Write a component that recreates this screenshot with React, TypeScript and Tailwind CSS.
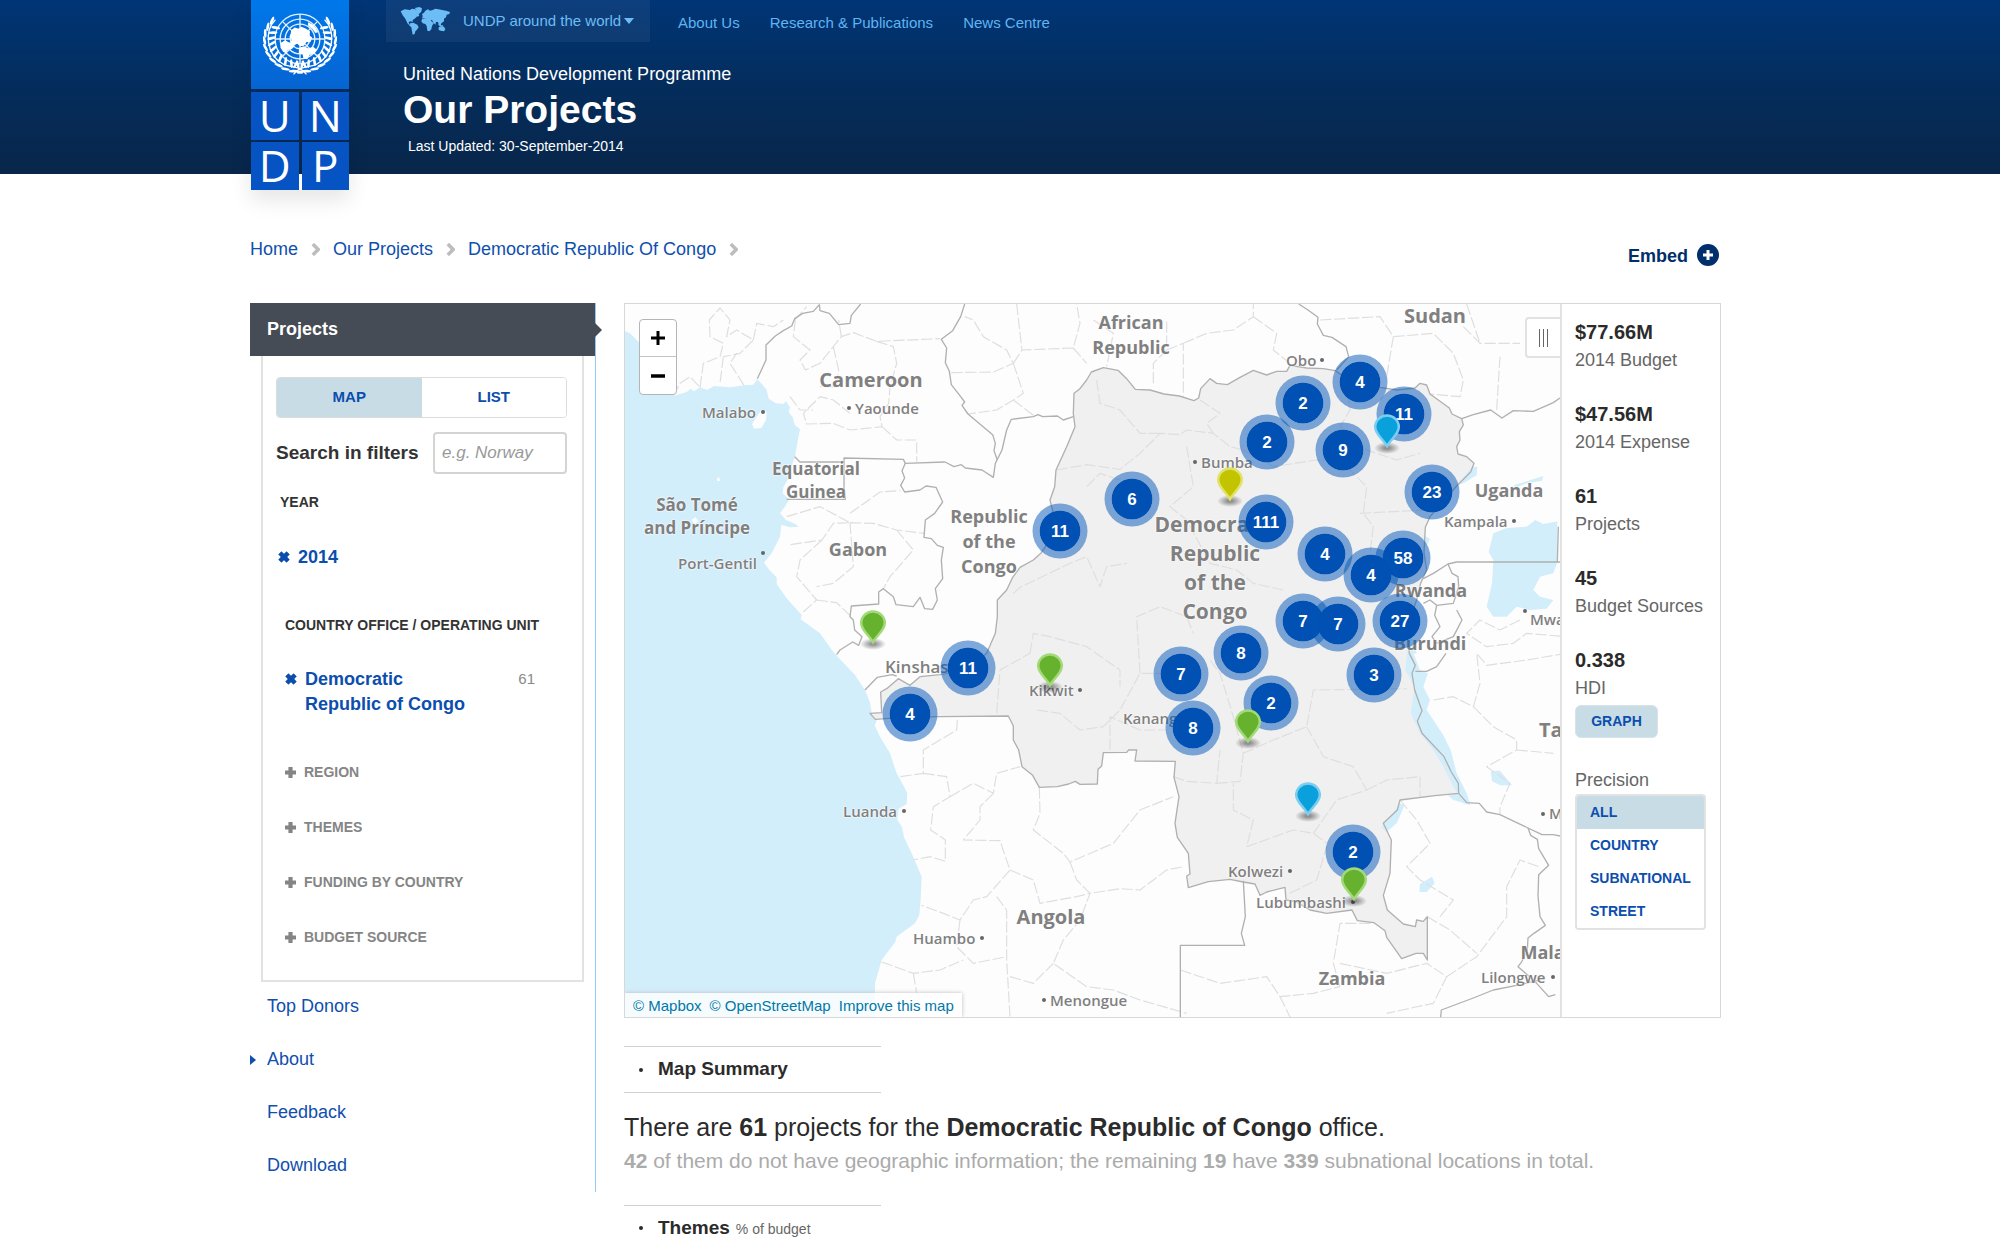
import React from "react";

const SANS = "font-['Liberation_Sans',Arial,sans-serif]";

/* ---------- Header artwork ---------- */

const leafAngles = [18, 31, 44, 57, 70, 83, 96, 109, 122, 135, 148];

function Emblem() {
  const spokes = [0, 45, 90, 135];
  return (
    <svg viewBox="0 0 220 190" className="h-[64px] w-[74px]" aria-hidden="true">
      <g stroke="#e4f2ff" fill="none" strokeWidth="4">
        {[74, 59, 44, 29].map((r) => (
          <circle key={r} cx="110" cy="80" r={r} />
        ))}
        {spokes.map((a) => (
          <path key={a} d="M36 80H184" transform={`rotate(${a} 110 80)`} />
        ))}
      </g>
      <g fill="#ffffff">
        <path d="M84 54l10-8 12 4 8-6 14 6 12 8-2 12 8 6-4 12-14 2-6 10-12 2-8-8-10 4-10-8 4-10-8-6 4-8z" />
        <path d="M52 92l14-8 10 6 12 2 6 10-8 8-12 2-6 10-8-4-8-12z" />
        <path d="M108 106l14-4 12 6 16-4 10 8-8 12-14 4-6 12-12-2-2-12-12-6z" />
        <path d="M134 30l12 6 10 10 8 14-8 2-10-12-12-10z" />
      </g>
      <g stroke="#ffffff" fill="none" strokeWidth="4" strokeLinecap="round">
        <path d="M36 24C4 56 8 128 62 156C88 166 110 160 128 184" />
        <path d="M184 24C216 56 212 128 158 156C132 166 110 160 92 184" />
      </g>
      <g fill="#ffffff">
        {[1, -1].map((side) => (
          <g key={side} transform={side === 1 ? undefined : "translate(220 0) scale(-1 1)"}>
            {leafAngles.map((a) => {
              const t = ((a + 38) * Math.PI) / 180;
              const x = 110 - Math.sin(t) * 96;
              const y = 84 - Math.cos(t) * 84;
              return (
                <g key={a} transform={`translate(${x} ${y}) rotate(${-a - 10})`}>
                  <ellipse cx="9" cy="-8" rx="13" ry="4" transform="rotate(-38 0 0)" />
                  <ellipse cx="9" cy="8" rx="13" ry="4" transform="rotate(38 0 0)" />
                </g>
              );
            })}
          </g>
        ))}
      </g>
    </svg>
  );
}

function WorldIcon() {
  return (
    <svg viewBox="512 22 150 90" className="h-[30px] w-[50px]" fill="#6cbcf5" aria-hidden="true">
      <path d="M514 38l12-6 16 2 6-4 10 2 8 4-4 6 6 4 2 6-8 2-6 6-6 4 0 6-6-2-6 2 2 8 8 2 2 6-8-4-8-8-6-14-8-10z" />
      <path d="M556 28l14-3 8 4-2 10-8 8-8-4 2-8z" />
      <path d="M542 74l10-2 12 6 4 8-6 8-4 4-2 8-6 2-2-10-2-12-6-6z" />
      <path d="M580 52l-2-6 6-4 4-6 8-4 6 4 8-2 8-4 10 2 10 2 12 2 12 4-2 6-8 2-2 8-6 4 0 8-8 6-2 6-6-2-2-8-6 0-2 8-6-6-4-8-8 0-8-4-8-2-6 2z" />
      <path d="M578 62l10-4 14 2 6 10 6 2-6 10-2 10-6 6-6-2-2-14-4-6-8-2-4-6z" />
      <path d="M628 86l8-4 8 2 4 8-4 6-10-2-6-2zM626 76l10 4 6 0-2 3-10-1z" />
    </svg>
  );
}

function LogoTile({ letter }: { letter: string }) {
  return (
    <span className="flex h-12 items-center justify-center bg-[#0653c3] font-['Open_Sans','Noto_Sans',sans-serif] text-[44px] leading-[46px] text-white">
      <span className="h-12">{letter}</span>
    </span>
  );
}

function Header() {
  return (
    <header className="h-[174px] bg-linear-to-b from-[#003576] via-[#042d5c] to-[#08264a]">
      <div className="mx-auto flex max-w-[1500px]">
        <a href="#undp" aria-label="UNDP" className="z-10 ml-px block h-[190px] w-[98px] shrink-0 shadow-[0_10px_20px_rgba(0,0,0,0.1)]">
          <span className="flex h-[89px] justify-center bg-linear-to-b from-[#0078ea] to-[#0664d2] pt-[12px]">
            <Emblem />
          </span>
          <span className="mt-[3px] grid grid-cols-2 gap-x-[3px] gap-y-[2px]">
            {["U", "N", "D", "P"].map((l) => (
              <LogoTile key={l} letter={l} />
            ))}
          </span>
        </a>
        <div className="ml-[37px] grow">
          <nav className="flex h-[42px] items-center text-[15px] text-[#5fb4f3]">
            <button className="flex h-full w-[264px] items-center bg-white/5 pl-[14px] text-[#6cbcf5]">
              <WorldIcon />
              <span className="ml-[13px]">UNDP around the world</span>
              <svg viewBox="0 0 10 6" className="ml-[3px] h-[6px] w-[10px]" fill="currentColor" aria-hidden="true">
                <path d="M0 0h10L5 6z" />
              </svg>
            </button>
            <a href="#about-us" className="ml-[28px] pt-1">About Us</a>
            <a href="#research" className="ml-[30px] pt-1">Research &amp; Publications</a>
            <a href="#news" className="ml-[30px] pt-1">News Centre</a>
          </nav>
          <div className="ml-[17px] pt-[20px] text-white">
            <p className="text-[18px] leading-[24px]">United Nations Development Programme</p>
            <h1 className="text-[39px] leading-[48px] font-bold">Our Projects</h1>
            <p className="ml-[5px] text-[14px] leading-[24px]">Last Updated: 30-September-2014</p>
          </div>
        </div>
      </div>
    </header>
  );
}

/* ---------- Breadcrumbs ---------- */

function Chevron() {
  return (
    <svg viewBox="0 0 10 14" className="mx-[13px] h-[13px] w-[9px]" fill="none" stroke="#bdbdbd" strokeWidth="4" aria-hidden="true">
      <path d="M2 1l6 6-6 6" />
    </svg>
  );
}

function Crumbs() {
  return (
    <div className="flex h-[129px] justify-between">
      <nav aria-label="Breadcrumb" className="mt-[63px] flex h-6 items-center self-start text-[18px] text-[#0f4fae]">
        {["Home", "Our Projects", "Democratic Republic Of Congo"].map((c) => (
          <React.Fragment key={c}>
            <a href="#crumb">{c}</a>
            <Chevron />
          </React.Fragment>
        ))}
      </nav>
      <button className="mt-[70px] mr-[2px] flex h-6 items-center gap-[9px] text-[18px] font-bold text-[#002f6c]">
        Embed
        <svg viewBox="0 0 22 22" className="mb-[2px] h-[22px] w-[22px]" aria-hidden="true">
          <circle cx="11" cy="11" r="11" fill="#002f6c" />
          <path d="M11 6v10M6 11h10" stroke="#fff" strokeWidth="3" />
        </svg>
      </button>
    </div>
  );
}

/* ---------- Sidebar ---------- */

function PlusMark({ className }: { className: string }) {
  return (
    <svg viewBox="0 0 10 10" className={className} fill="currentColor" aria-hidden="true">
      <path d="M3.100 0h3.800v3.100H10v3.800H6.900V10H3.100V6.900H0V3.100h3.100z" />
    </svg>
  );
}

function Sidebar() {
  return (
    <aside className="w-[346px] shrink-0 border-r border-[#93c9f0]">
      <h2 className="flex h-[53px] items-center bg-[#454c55] pl-[17px] text-[18px] font-bold text-white">
        <span className="grow">Projects</span>
        <svg viewBox="0 0 7 14" className="-mr-[7px] h-[14px] w-[7px]" fill="#454c55" aria-hidden="true">
          <path d="M0 0l7 7-7 7z" />
        </svg>
      </h2>
      <div className="mx-[11px] h-[626px] border-2 border-t-0 border-[#e2e2e2] pt-[21px] pr-[15px] pl-[13px]">
        <div className="grid h-[41px] grid-cols-2 overflow-hidden rounded border border-[#dcdcdc] text-[15px] font-bold text-[#0b4eae]">
          <button className="bg-[#c7dce5]">MAP</button>
          <button className="bg-white">LIST</button>
        </div>
        <div className="mt-[14px] flex h-[42px] items-center">
          <label htmlFor="filter-search" className="grow text-[19px] font-bold whitespace-nowrap text-[#333]">
            Search in filters
          </label>
          <input
            id="filter-search"
            placeholder="e.g. Norway"
            className="h-[42px] w-[134px] rounded border-2 border-[#d4d4d4] px-[7px] text-[17px] italic placeholder:text-[#999]"
          />
        </div>
        <h3 className="mt-[18px] ml-[4px] h-5 text-[14px] leading-5 font-bold text-[#333]">YEAR</h3>
        <button className="mt-[33px] ml-[2px] flex h-6 items-center gap-[8px] text-[18px] font-bold text-[#0b4eae]">
          <PlusMark className="h-[12px] w-[12px] rotate-45" />
          2014
        </button>
        <h3 className="mt-[46px] ml-[9px] h-5 text-[14px] leading-5 font-bold whitespace-nowrap text-[#333]">
          COUNTRY OFFICE / OPERATING UNIT
        </h3>
        <div className="mt-[32px] ml-[9px] flex items-start">
          <button className="flex w-[190px] gap-[8px] text-left text-[18px] leading-[25px] font-bold text-[#0b4eae]">
            <PlusMark className="mt-[6px] h-[12px] w-[12px] shrink-0 rotate-45" />
            <span>Democratic Republic of Congo</span>
          </button>
          <span className="ml-auto pr-[32px] text-[15px] leading-[24px] text-[#8a8a8a]">61</span>
        </div>
        <ul className="mt-[28px] ml-[9px] text-[14px] font-bold text-[#858585]">
          {["REGION", "THEMES", "FUNDING BY COUNTRY", "BUDGET SOURCE"].map((s) => (
            <li key={s}>
              <button className="flex h-[55px] items-center gap-[8px]">
                <PlusMark className="h-[11px] w-[11px]" />
                {s}
              </button>
            </li>
          ))}
        </ul>
      </div>
      <nav className="-mt-[2px] text-[18px] text-[#0f4fae]">
        {["Top Donors", "About", "Feedback", "Download"].map((s) => (
          <a key={s} href="#section" className="flex h-[53px] items-center">
            <span className="flex w-[17px]">
              {s === "About" && (
                <svg viewBox="0 0 6 10" className="h-[10px] w-[6px]" fill="currentColor" aria-hidden="true">
                  <path d="M0 0l6 5-6 5z" />
                </svg>
              )}
            </span>
            {s}
          </a>
        ))}
      </nav>
    </aside>
  );
}

/* ---------- Map ---------- */

const OCEAN =
  "M0 88L30 100L60 130L120 240L160 288L200 276L212 266L222 274L240 262L262 270L282 258L330 262L372 256L400 254L412 238L428 254L440 270L446 296L468 310L490 312L498 304L510 322L506 336L518 352L524 374L540 388L532 430L525 470L514 500L504 538L490 562L488 580L508 598L496 618L480 640L498 660L526 672L536 680L510 682L484 674L480 710L455 760L432 788L448 810L470 832L470 852L500 895L545 945L542 958L600 1000L640 1056L660 1078L705 1125L735 1170L750 1208L756 1244L770 1262L764 1276L780 1310L810 1360L830 1420L850 1456L862 1480L860 1512L836 1526L832 1560L846 1580L852 1612L875 1660L905 1730L902 1800L898 1846L885 1870L830 1910L826 1926L785 1980L765 2050L764 2151L0 2151Z";

const DRC =
  "M766 1258L750 1240L785 1238L782 1176L800 1166L835 1136L870 1156L900 1130L960 1124L1040 1110L1100 1060L1126 1000L1132 950L1132 900L1160 870L1178 832L1200 802L1240 780L1264 758L1290 720L1300 640L1290 600L1304 560L1308 510L1340 440L1365 380L1360 340L1362 280L1378 268L1400 240L1414 216L1450 203L1494 211L1520 236L1546 268L1590 270L1632 282L1678 288L1722 302L1736 294L1742 266L1770 236L1790 250L1822 254L1860 232L1900 211L1940 225L1970 214L2000 214L2010 196L2060 204L2110 206L2146 212L2180 236L2230 250L2280 262L2330 270L2385 264L2400 250L2420 255L2430 282L2460 304L2488 324L2496 342L2525 356L2530 375L2518 395L2520 420L2510 440L2514 462L2540 470L2562 490L2552 516L2510 558L2430 650L2416 682L2412 758L2420 810L2402 850L2390 900L2372 950L2362 1000L2368 1060L2386 1096L2376 1120L2384 1170L2406 1232L2392 1264L2406 1300L2442 1338L2472 1370L2494 1416L2515 1450L2516 1480L2445 1487L2340 1500L2332 1530L2290 1570L2314 1620L2310 1720L2290 1786L2302 1830L2350 1872L2386 1880L2390 1860L2410 1864L2422 1850L2422 1980L2410 1960L2388 1960L2345 1976L2300 1912L2295 1892L2262 1868L2212 1862L2196 1830L2120 1840L2070 1830L2030 1806L1998 1800L1995 1762L1940 1776L1920 1786L1905 1752L1870 1746L1830 1738L1765 1745L1705 1763L1700 1728L1710 1722L1705 1660L1672 1612L1665 1570L1677 1490L1662 1432L1666 1384L1545 1383L1550 1350L1526 1350L1520 1357L1450 1358L1445 1398L1434 1408L1432 1452L1380 1453L1366 1444L1346 1452L1312 1460L1258 1462L1238 1426L1206 1400L1196 1350L1180 1320L1180 1278L1165 1248L960 1250L850 1252Z";

const BORDERS = [
  "M412 236L438 180L438 135L466 108L490 92L515 78L524 56L548 40L580 34L598 14L600 32L628 40L656 74L690 70L694 46L722 12",
  "M1034 12L1022 50L998 92L964 118L980 144L976 188L988 214L994 254L1022 290L1034 306L1026 316L1044 342L1118 404L1126 430L1122 452L1132 480",
  "M524 470L540 486L672 486L672 474L850 478L856 490L975 486L1002 500L1024 494L1036 504L1086 510L1120 532L1126 490L1146 450L1160 390L1174 358L1240 350L1254 344L1268 350L1312 348L1330 360L1360 350",
  "M856 490L846 512L854 534L842 556L854 576L900 570L918 558L948 562L968 606L944 640L916 660L912 712L934 716L952 736L970 742L964 780L968 836L946 866L952 900L938 928L914 926L900 892L880 920L828 914L820 890L790 866L776 876L776 912L694 918L690 950L700 960L704 990L726 1010L716 1036L698 1026L660 1050L650 1064",
  "M672 486L672 560L676 598L500 598",
  "M735 1170L772 1132L816 1124L830 1128",
  "M2036 12L2064 30L2094 52L2092 72L2110 106L2136 112L2178 140L2186 170L2150 210",
  "M2525 356L2560 344L2612 330L2646 354L2680 332L2740 334L2800 308L2840 280",
  "M2410 836L2440 820L2484 792L2510 786L2840 786M2815 680L2812 786",
  "M2484 792L2496 820L2514 830L2516 860L2500 910L2450 916L2430 900L2410 910",
  "M2450 916L2444 946L2460 980L2436 1010L2450 1030L2500 1010L2526 960L2510 930",
  "M2386 1114L2420 1114L2450 1100L2478 1060",
  "M2516 1480L2540 1508L2578 1510L2600 1536L2640 1544L2690 1568L2724 1584L2766 1604L2800 1604L2840 1612",
  "M2724 1584L2732 1606L2752 1618L2756 1646L2786 1696L2756 1724L2754 1788L2760 1850L2776 1876L2742 1900L2724 1914L2722 1950L2706 1984L2694 2000L2710 2014L2750 2050L2786 2090L2806 2084",
  "M2462 2151L2464 2130L2560 2094L2620 2070L2690 2056L2760 2040",
  "M1870 1742L1876 1850L1864 1900L1874 1936L1681 1936L1681 2151",
];

const PROVINCES = [
  "M160 288L180 250L210 230L240 262M240 262L250 190L300 170L310 130L270 110L268 60L300 24L330 60L320 110L350 90L400 120L360 160L310 170M310 170L300 250M372 256L330 190L350 160M400 120L410 70L460 80L490 60",
  "M524 60L560 20M526 60L520 110L570 150L540 180L556 210L600 190L640 140L664 110L700 98L770 124L960 116M664 110L656 60M640 140L656 210L650 260L600 260M770 124L820 140L830 190L810 260L806 310L780 350L786 380L730 386L690 390L640 370L560 372L550 340L600 290L640 300L690 340",
  "M786 380L830 420L890 420L890 486M510 290L540 330L580 330M994 218L1120 216L1180 190L1160 150L1090 110L1060 60L1034 50M1180 190L1206 150L1360 144L1380 70L1370 12M1190 12L1200 100L1206 150M1180 190L1210 280L1180 300L1130 330L1044 342M1180 300L1240 346M1360 144L1400 190",
  "M500 650L600 620L690 668L640 670L606 720L510 734M690 668L760 670L830 690L912 700M690 640L780 576L842 572M606 720L540 780L530 830L590 900L545 940M830 690L880 750L810 830L790 866M690 668L700 800L640 850L590 860M590 900L650 908L694 950",
  "M1310 510L1400 494L1500 508L1560 460L1620 400L1680 404L1700 390L1780 400L1830 440L1870 450M1400 560L1440 520L1500 540M1180 880L1200 862L1350 790L1400 770L1440 860L1460 800L1520 790M1870 450L1960 500L2090 480L2160 480L2240 560L2230 640L2260 680L2250 760",
  "M1430 240L1440 310L1500 330L1560 400L1620 400M1740 300L1800 340L1760 370L1780 400M1700 440L1720 560L1650 620L1700 660L1770 790L1850 810L1900 850L1990 870M2180 236L2190 330L2160 380L2240 450L2330 480L2400 460",
  "M1230 1060L1240 1000L1290 1010L1400 1040L1500 1110L1500 1160M1130 1240L1140 1110L1230 1060M1250 1230L1320 1240L1380 1290L1450 1280L1500 1230L1560 1120L1700 1120M1560 1120L1550 950L1620 920L1700 950L1720 1000M1470 1350L1470 1250L1560 1290L1640 1290",
  "M1660 1430L1700 1444L1790 1450L1800 1350M1790 1450L1860 1444L1870 1360L1840 1250L1800 1120L1770 1080M1870 1360L1960 1320L2060 1280L2080 1170L2360 1166M2060 1280L2110 1370L2200 1400L2240 1470L2150 1500L2080 1600L2020 1590L1880 1640L1900 1560L1840 1530L1840 1450M2240 1470L2300 1440L2400 1430L2400 1490M2080 1600L2120 1630M2010 1780L2090 1740L2120 1640",
  "M1012 1260L1010 1290L910 1350L910 1420L840 1430M910 1420L980 1430L990 1490L940 1520L932 1590L976 1620L976 1684L930 1670L880 1680M990 1490L1060 1450L1120 1480L1130 1420L1200 1400M1120 1480L1080 1520L1080 1560L1030 1620L1140 1622L1170 1710L1100 1790L1060 1800L1020 1860L970 1840L905 1816",
  "M1258 1462L1260 1540L1240 1590L1330 1660L1350 1686L1480 1630L1560 1530L1660 1490M1350 1686L1370 1740L1410 1780L1500 1766L1560 1770L1640 1710L1690 1700M1170 1710L1240 1740L1260 1810L1370 1790L1410 1780L1380 1860L1330 1920L1300 1990L1400 2060L1480 2070L1560 2100L1700 2140M1130 1790L1160 1830L1160 1980L1170 2151M1020 1860L1010 1940L1060 1990L1160 1970M785 1986L880 2020L960 2010L1030 1980M880 2020L890 2080M1170 2030L1240 2050L1300 1990",
  "M1681 2010L1800 2050L1940 2030L1980 2090L2080 2080L2160 2060M1980 2090L2010 2151M2160 2060L2140 1990L2160 1870L2260 1870M2422 1850L2490 1890L2570 1960M2160 1990L2300 2020L2420 1990L2480 2030L2440 2110L2300 2140M2480 2030L2570 1970L2660 1850L2660 1760L2700 1680L2756 1700",
  "M2340 1500L2390 1560L2430 1630L2360 1700L2400 1740L2500 1800L2460 1850M2440 1200L2500 1190L2560 1220L2580 1150L2570 1060L2600 1096L2720 1080L2840 1060M2560 1220L2620 1280L2690 1320L2690 1350L2600 1400L2670 1450L2640 1520L2640 1544M2690 1350L2800 1360",
  "M2100 60L2280 50L2320 110L2440 100L2500 160L2530 240L2520 290L2430 282M2320 110L2300 230M2530 80L2580 130L2700 130M2540 12L2580 130M2640 170L2630 330M1420 60L1480 100L1460 200M1690 130L1760 100L1840 90L1900 50L1900 12M1640 150L1690 130L1690 290M1600 250L1600 190L1640 150L1640 60M1900 50L1970 100L1960 150L2010 190",
  "M2220 640L2415 630M2260 870L2240 800L2400 780M2700 960L2640 990L2580 960L2540 1000L2600 1040L2680 1030L2720 1000L2840 1010",
];

const LAKES = [
  "M2620 700L2660 684L2720 680L2746 660L2770 672L2812 664L2812 786L2800 820L2760 830L2740 870L2760 890L2800 900L2780 926L2730 930L2690 920L2660 950L2620 950L2600 920L2616 850L2620 780L2606 756Z",
  "M2362 1050L2380 1060L2400 1110L2424 1120L2410 1160L2430 1200L2420 1230L2440 1260L2470 1306L2492 1350L2510 1420L2540 1480L2552 1516L2530 1510L2500 1460L2470 1400L2440 1350L2400 1300L2372 1240L2384 1160L2356 1110Z",
  "M2340 1510L2354 1516L2330 1570L2300 1596L2284 1580L2318 1540Z",
  "M2510 556L2556 500L2572 500L2570 526L2530 550Z",
  "M2612 1414L2640 1412L2676 1456L2640 1456L2616 1444Z",
  "M2400 1752L2436 1730L2444 1750L2420 1776L2398 1776Z",
  "M2484 1486L2514 1480L2540 1512L2500 1500Z",
  "M2680 556L2770 528L2766 542L2720 550L2690 562Z",
  "M2410 706L2430 716L2418 740Z",
  "M2362 990L2374 1010L2390 1060L2366 1064Z",
];

type City = { name: string; x: number; y: number; dot?: [number, number]; big?: boolean };

const CITIES: City[] = [
  { name: "Yaounde", x: 855, y: 408, dot: [849, 408] },
  { name: "Malabo", x: 702, y: 412, dot: [763, 412] },
  { name: "Port-Gentil", x: 678, y: 563, dot: [763, 553] },
  { name: "Obo", x: 1286, y: 360, dot: [1322, 360] },
  { name: "Bumba", x: 1201, y: 462, dot: [1195, 462] },
  { name: "Kampala", x: 1444, y: 521, dot: [1514, 521] },
  { name: "Mwanza", x: 1530, y: 619, dot: [1525, 611] },
  { name: "Mbeya", x: 1549, y: 813, dot: [1543, 814] },
  { name: "Lilongwe", x: 1481, y: 977, dot: [1553, 977] },
  { name: "Lubumbashi", x: 1256, y: 902, dot: [1353, 902] },
  { name: "Kolwezi", x: 1228, y: 871, dot: [1290, 871] },
  { name: "Kananga", x: 1123, y: 718 },
  { name: "Kikwit", x: 1029, y: 690, dot: [1080, 690] },
  { name: "Kinshasa", x: 885, y: 667, big: true },
  { name: "Luanda", x: 843, y: 811, dot: [904, 811] },
  { name: "Huambo", x: 913, y: 938, dot: [982, 938] },
  { name: "Menongue", x: 1050, y: 1000, dot: [1044, 1000] },
];

const COUNTRY_SIZES = {
  sm: "text-[17px] leading-[23px]",
  md: "text-[18px] leading-[25px]",
  lg: "text-[20px] leading-[25px]",
  xl: "text-[21px] leading-[29px]",
};

type Country = { lines: string[]; x: number; y: number; size: keyof typeof COUNTRY_SIZES };

const COUNTRIES: Country[] = [
  { lines: ["African", "Republic"], x: 1131, y: 335, size: "md" },
  { lines: ["Sudan"], x: 1435, y: 315, size: "lg" },
  { lines: ["Cameroon"], x: 871, y: 379, size: "lg" },
  { lines: ["Equatorial", "Guinea"], x: 816, y: 480, size: "sm" },
  { lines: ["São Tomé", "and Príncipe"], x: 697, y: 516, size: "sm" },
  { lines: ["Gabon"], x: 858, y: 549, size: "md" },
  { lines: ["Republic", "of the", "Congo"], x: 989, y: 541, size: "md" },
  { lines: ["Democratic", "Republic", "of the", "Congo"], x: 1215, y: 568, size: "xl" },
  { lines: ["Uganda"], x: 1509, y: 490, size: "md" },
  { lines: ["Rwanda"], x: 1431, y: 590, size: "md" },
  { lines: ["Burundi"], x: 1430, y: 643, size: "md" },
  { lines: ["Tanzania"], x: 1584, y: 729, size: "lg" },
  { lines: ["Malawi"], x: 1553, y: 952, size: "md" },
  { lines: ["Zambia"], x: 1352, y: 978, size: "md" },
  { lines: ["Angola"], x: 1051, y: 916, size: "lg" },
];

const CLUSTERS: [number, number, number][] = [
  [4, 1360, 382], [2, 1303, 403], [11, 1404, 414], [2, 1267, 442], [9, 1343, 450],
  [23, 1432, 492], [6, 1132, 499], [111, 1266, 522], [11, 1060, 531], [4, 1325, 554],
  [58, 1403, 558], [4, 1371, 575], [7, 1303, 621], [27, 1400, 621], [7, 1338, 624],
  [8, 1241, 653], [11, 968, 668], [7, 1181, 674], [3, 1374, 675], [2, 1271, 703],
  [4, 910, 714], [8, 1193, 728], [2, 1353, 852],
];

const GREEN = { fill: "#66b22e", rim: "#a3da78" };
const BLUE = { fill: "#0aa0dc", rim: "#7ccdf0" };
const YELLOW = { fill: "#c3c400", rim: "#e2e26a" };

const PINS = [
  { x: 873, y: 610, c: GREEN },
  { x: 1050, y: 653, c: GREEN },
  { x: 1230, y: 467, c: YELLOW },
  { x: 1387, y: 414, c: BLUE },
  { x: 1248, y: 709, c: GREEN },
  { x: 1308, y: 782, c: BLUE },
  { x: 1354, y: 867, c: GREEN },
];

/* Map data is kept in sheet coordinates; the canvas starts at this corner. */
const at = (x: number, y: number) => ({ left: x - 625, top: y - 304 });

function MapCanvas() {
  return (
    <div className="relative h-[713px] min-w-0 grow overflow-hidden bg-[#fdfdfd]">
      <svg viewBox="15 12 2805 2139" preserveAspectRatio="xMinYMin slice" className="absolute inset-0 h-full w-full" aria-hidden="true">
        <path d={OCEAN} fill="#d3eefb" />
        <path d="M396 372L410 350L424 330L440 336L438 360L424 384L402 386Z" fill="#fdfdfd" />
        <path d="M214 660L226 652L236 664L224 672ZM290 536L298 532L300 542L292 544Z" fill="#fdfdfd" />
        <path d={DRC} fill="#f0f0f0" />
        {LAKES.map((d) => (
          <path key={d} d={d} fill="#d3eefb" />
        ))}
        <g fill="none" stroke="#dedede" strokeWidth="3.5" strokeLinejoin="round" strokeDasharray="34 8">
          {PROVINCES.map((d) => (
            <path key={d} d={d} />
          ))}
        </g>
        <g fill="none" stroke="#b0b0b0" strokeWidth="4" strokeLinejoin="round">
          <path d={DRC} />
          {BORDERS.map((d) => (
            <path key={d} d={d} />
          ))}
        </g>
      </svg>

      <div className="font-['Open_Sans','Noto_Sans',sans-serif] text-[#808080] [text-shadow:0_0_2px_#fff,0_0_2px_#fff]">
        {COUNTRIES.map((c) => (
          <div
            key={c.lines.join(" ") + c.x}
            style={at(c.x, c.y)}
            className={`absolute -translate-x-1/2 -translate-y-1/2 text-center font-bold whitespace-nowrap ${COUNTRY_SIZES[c.size]}`}
          >
            {c.lines.map((l) => (
              <div key={l}>{l}</div>
            ))}
          </div>
        ))}
        {CITIES.map((c) => (
          <React.Fragment key={c.name}>
            <span
              style={at(c.x, c.y)}
              className={`absolute -translate-y-1/2 font-semibold whitespace-nowrap ${c.big ? "text-[17px]" : "text-[15px]"}`}
            >
              {c.name}
            </span>
            {c.dot && (
              <span
                style={at(c.dot[0], c.dot[1])}
                className="absolute h-1 w-1 -translate-x-1/2 -translate-y-1/2 rounded-full bg-[#666]"
              />
            )}
          </React.Fragment>
        ))}
      </div>

      {CLUSTERS.map(([n, x, y]) => (
        <button
          key={`${x}-${y}`}
          style={at(x, y)}
          className="absolute flex h-[55px] w-[55px] -translate-x-1/2 -translate-y-1/2 items-center justify-center rounded-full border-[7px] border-[#0055b8]/50 bg-[#0051b3] bg-clip-padding text-[17px] font-bold text-white"
        >
          {n}
        </button>
      ))}

      {PINS.map((p) => (
        <svg key={`${p.x}-${p.y}`} viewBox="0 0 30 42" style={at(p.x - 15, p.y)} className="absolute h-[42px] w-[30px]" aria-hidden="true">
          <defs>
            <radialGradient id="pin-shade">
              <stop offset="0.2" stopColor="#000" stopOpacity="0.4" />
              <stop offset="1" stopColor="#000" stopOpacity="0" />
            </radialGradient>
          </defs>
          <ellipse cx="15" cy="34" rx="13" ry="6" fill="url(#pin-shade)" />
          <path
            d="M15 1.500C8.500 1.500 3.200 6.500 3.200 13C3.200 20 10.500 24.500 15 32C19.500 24.500 26.800 20 26.800 13C26.800 6.500 21.500 1.500 15 1.500Z"
            fill={p.c.fill}
            stroke={p.c.rim}
            strokeWidth="2.500"
          />
        </svg>
      ))}

      <div className="absolute top-[15px] left-[14px] flex w-[38px] flex-col overflow-hidden rounded border border-[#b5b5b5] bg-white">
        <button aria-label="Zoom in" className="flex h-[37px] items-center justify-center border-b border-[#c4c4c4]">
          <svg viewBox="0 0 14 14" className="h-[14px] w-[14px]" stroke="#000" strokeWidth="3" aria-hidden="true">
            <path d="M7 0v14M0 7h14" />
          </svg>
        </button>
        <button aria-label="Zoom out" className="flex h-[37px] items-center justify-center">
          <svg viewBox="0 0 14 14" className="h-[14px] w-[14px]" stroke="#000" strokeWidth="3.500" aria-hidden="true">
            <path d="M0 7h14" />
          </svg>
        </button>
      </div>

      <button aria-label="Toggle panel" className="absolute top-[13px] right-0 flex h-[41px] w-[35px] items-center justify-center gap-[3px] rounded-l border-2 border-r-0 border-[#e2e2e2] bg-white">
        <span className="h-[18px] w-px bg-[#666]" />
        <span className="h-[18px] w-px bg-[#666]" />
        <span className="h-[18px] w-px bg-[#666]" />
      </button>

      <p className="absolute bottom-0 left-0 flex h-[24px] items-center gap-[8px] bg-white/80 px-[8px] pt-[2px] text-[15px] text-[#0078a8] shadow-[0_0_4px_#bbb]">
        <a href="#mapbox">© Mapbox</a>
        <a href="#osm">© OpenStreetMap</a>
        <a href="#improve">Improve this map</a>
      </p>
    </div>
  );
}

const STATS = [
  ["$77.66M", "2014 Budget"],
  ["$47.56M", "2014 Expense"],
  ["61", "Projects"],
  ["45", "Budget Sources"],
  ["0.338", "HDI"],
];

function StatsPanel() {
  return (
    <div className="w-[160px] shrink-0 border-l-2 border-[#e2e2e2] pt-[14px] pl-[13px]">
      <dl>
        {STATS.map(([v, l]) => (
          <div key={l} className="flex h-[82px] flex-col">
            <dt className="order-2 text-[18px] leading-[28px] whitespace-nowrap text-[#666]">{l}</dt>
            <dd className="text-[20px] leading-[28px] font-bold text-[#2b2b2b]">{v}</dd>
          </div>
        ))}
      </dl>
      <button className="-mt-[23px] block h-[33px] w-[83px] rounded-md border border-[#d9e2e6] bg-[#c7dce5] text-[14px] font-bold text-[#0b4eae]">
        GRAPH
      </button>
      <h3 className="mt-[28px] text-[18px] leading-[28px] text-[#666]">Precision</h3>
      <div className="w-[131px] overflow-hidden rounded border-2 border-[#e2e2e2] text-[14px] font-bold text-[#0b4eae]">
        {["ALL", "COUNTRY", "SUBNATIONAL", "STREET"].map((p) => (
          <button
            key={p}
            className={`block h-[33px] w-full pl-[13px] text-left ${p === "ALL" ? "bg-[#c7dce5]" : "bg-white"}`}
          >
            {p}
          </button>
        ))}
      </div>
    </div>
  );
}

/* ---------- Page ---------- */

export default function App() {
  return (
    <div className={`min-h-screen bg-white ${SANS}`}>
      <Header />
      <main className="mx-auto max-w-[1500px] pr-[29px]">
        <Crumbs />
        <div className="flex items-start">
          <Sidebar />
          <div className="ml-[28px] min-w-0 grow">
            <section aria-label="Project map" className="flex border border-[#d8d8d8]">
              <MapCanvas />
              <StatsPanel />
            </section>
            <section className="mt-[28px]">
              <h2 className="flex h-[47px] w-[257px] items-center border-y border-[#d0d0d0] text-[19px] font-bold text-[#2b2b2b]">
                <span className="mr-[15px] ml-[15px] h-[4px] w-[4px] rounded-full bg-[#2b2b2b]" />
                Map Summary
              </h2>
              <p className="mt-[17px] text-[25px] leading-[34px] text-[#2b2b2b]">
                There are <b>61</b> projects for the <b>Democratic Republic of Congo</b> office.
              </p>
              <p className="text-[21px] leading-[34px] text-[#ababab]">
                <b>42</b> of them do not have geographic information; the remaining <b>19</b> have <b>339</b> subnational
                locations in total.
              </p>
            </section>
            <section className="mt-[27px]">
              <h2 className="flex h-[45px] w-[257px] items-center border-t border-[#d0d0d0] text-[19px] font-bold text-[#2b2b2b]">
                <span className="mr-[15px] ml-[15px] h-[4px] w-[4px] rounded-full bg-[#2b2b2b]" />
                Themes
                <small className="ml-[6px] pt-[2px] text-[14px] font-normal text-[#666]">% of budget</small>
              </h2>
            </section>
          </div>
        </div>
      </main>
    </div>
  );
}
